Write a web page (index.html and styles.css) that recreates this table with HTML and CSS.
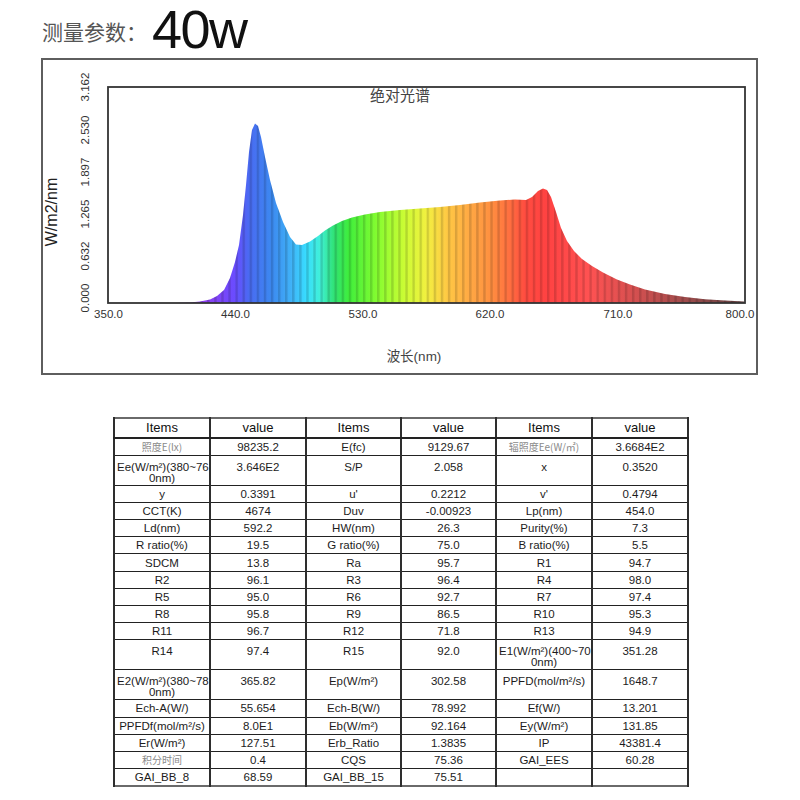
FILE: index.html
```html
<!DOCTYPE html>
<html lang="zh">
<head>
<meta charset="utf-8">
<title>测量参数</title>
<link rel="stylesheet" href="styles.css">
</head>
<body>
<div class="header">
  <span class="label">测量参数：</span>
  <span class="power">40w</span>
</div>

<div class="chart">
  <svg class="chart-svg" width="713" height="313" viewBox="43 60 713 313" xmlns="http://www.w3.org/2000/svg">
    <defs>
      <linearGradient id="spec-grad" gradientUnits="userSpaceOnUse" x1="108" y1="0" x2="745" y2="0">
        <stop offset="0.066" stop-color="#8a38d8"/>
        <stop offset="0.155" stop-color="#8c40f0"/>
        <stop offset="0.199" stop-color="#6a4cff"/>
        <stop offset="0.221" stop-color="#4a6af2"/>
        <stop offset="0.256" stop-color="#3c88f0"/>
        <stop offset="0.289" stop-color="#40b4f8"/>
        <stop offset="0.311" stop-color="#38dcff"/>
        <stop offset="0.333" stop-color="#40f0d8"/>
        <stop offset="0.355" stop-color="#30e274"/>
        <stop offset="0.378" stop-color="#40ee3c"/>
        <stop offset="0.422" stop-color="#84fc30"/>
        <stop offset="0.466" stop-color="#ccfc34"/>
        <stop offset="0.500" stop-color="#f2f040"/>
        <stop offset="0.533" stop-color="#ffc844"/>
        <stop offset="0.566" stop-color="#ffaa44"/>
        <stop offset="0.600" stop-color="#ff9040"/>
        <stop offset="0.633" stop-color="#ff6c40"/>
        <stop offset="0.655" stop-color="#ff4c40"/>
        <stop offset="0.689" stop-color="#ff4242"/>
        <stop offset="0.755" stop-color="#ff5252"/>
        <stop offset="0.822" stop-color="#d85050"/>
        <stop offset="0.911" stop-color="#9c4c4c"/>
        <stop offset="1" stop-color="#604040"/>
      </linearGradient>
      <pattern id="stripes" patternUnits="userSpaceOnUse" x="108" y="0" width="7.08" height="10">
        <rect x="0" y="0" width="2.4" height="10" fill="#000" fill-opacity="0.14"/>
      </pattern>
      <path id="spec" d="M175,303 L190,302.5 L200,301.5 L210,299.5 L217,296 L224,290 L230,278 L235,262 L239,245 L243,215 L246,185 L249,152 L252,130 L255,123.5 L258,126 L261,137 L265,157 L270,180 L276,203 L283,222 L290,237 L296,244.5 L302,245 L310,241.5 L318,236 L325,230.5 L333,225.5 L342,221 L352,217.5 L365,214.5 L380,212 L400,210 L420,208.5 L440,207 L460,205 L480,202.5 L500,200.5 L515,199.5 L526,200 L532,197 L538,191 L543,188.5 L547,190 L551,197 L556,212 L561,228 L567,241 L574,251 L582,259 L592,266 L603,272.5 L617,279.5 L630,284.5 L645,289.5 L665,294 L685,297 L705,299.2 L725,300.6 L744,301.5 L744,303 Z"/>
    </defs>

    <use href="#spec" fill="url(#spec-grad)"/>
    <use href="#spec" fill="url(#stripes)"/>
    <rect x="108" y="87" width="637" height="216" fill="none" stroke="#333" stroke-width="1.8"/>

    <text class="plot-title" x="400" y="101" text-anchor="middle">绝对光谱</text>

    <g class="ytick">
      <text x="85" y="87" transform="rotate(-90 85 87)" text-anchor="middle" dy="4">3.162</text>
      <text x="85" y="130" transform="rotate(-90 85 130)" text-anchor="middle" dy="4">2.530</text>
      <text x="85" y="172" transform="rotate(-90 85 172)" text-anchor="middle" dy="4">1.897</text>
      <text x="85" y="214" transform="rotate(-90 85 214)" text-anchor="middle" dy="4">1.265</text>
      <text x="85" y="256" transform="rotate(-90 85 256)" text-anchor="middle" dy="4">0.632</text>
      <text x="85" y="298" transform="rotate(-90 85 298)" text-anchor="middle" dy="4">0.000</text>
    </g>
    <text class="ylabel" x="51" y="212" transform="rotate(-90 51 212)" text-anchor="middle" dy="6">W/m2/nm</text>

    <g class="xtick">
      <text x="108.5" y="317.5" text-anchor="middle">350.0</text>
      <text x="235.5" y="317.5" text-anchor="middle">440.0</text>
      <text x="363" y="317.5" text-anchor="middle">530.0</text>
      <text x="490" y="317.5" text-anchor="middle">620.0</text>
      <text x="618" y="317.5" text-anchor="middle">710.0</text>
      <text x="740" y="317.5" text-anchor="middle">800.0</text>
    </g>
    <text class="xlabel" x="414" y="361" text-anchor="middle">波长(nm)</text>
  </svg>
</div>

<div class="table-wrap">
  <table class="data">
    <colgroup>
      <col class="c1"><col class="c2"><col class="c3"><col class="c4"><col class="c5"><col class="c6">
    </colgroup>
    <tr class="head">
      <td>Items</td><td>value</td><td>Items</td><td>value</td><td>Items</td><td>value</td>
    </tr>
    <tr>
      <td class="cn">照度E(lx)</td><td>98235.2</td><td>E(fc)</td><td>9129.67</td><td class="cn">辐照度Ee(W/㎡)</td><td>3.6684E2</td>
    </tr>
    <tr class="tall">
      <td>Ee(W/m²)(380~76<br>0nm)</td><td>3.646E2</td><td>S/P</td><td>2.058</td><td>x</td><td>0.3520</td>
    </tr>
    <tr>
      <td>y</td><td>0.3391</td><td>u'</td><td>0.2212</td><td>v'</td><td>0.4794</td>
    </tr>
    <tr>
      <td>CCT(K)</td><td>4674</td><td>Duv</td><td>-0.00923</td><td>Lp(nm)</td><td>454.0</td>
    </tr>
    <tr>
      <td>Ld(nm)</td><td>592.2</td><td>HW(nm)</td><td>26.3</td><td>Purity(%)</td><td>7.3</td>
    </tr>
    <tr>
      <td>R ratio(%)</td><td>19.5</td><td>G ratio(%)</td><td>75.0</td><td>B ratio(%)</td><td>5.5</td>
    </tr>
    <tr>
      <td>SDCM</td><td>13.8</td><td>Ra</td><td>95.7</td><td>R1</td><td>94.7</td>
    </tr>
    <tr>
      <td>R2</td><td>96.1</td><td>R3</td><td>96.4</td><td>R4</td><td>98.0</td>
    </tr>
    <tr>
      <td>R5</td><td>95.0</td><td>R6</td><td>92.7</td><td>R7</td><td>97.4</td>
    </tr>
    <tr>
      <td>R8</td><td>95.8</td><td>R9</td><td>86.5</td><td>R10</td><td>95.3</td>
    </tr>
    <tr>
      <td>R11</td><td>96.7</td><td>R12</td><td>71.8</td><td>R13</td><td>94.9</td>
    </tr>
    <tr class="tall">
      <td>R14</td><td>97.4</td><td>R15</td><td>92.0</td><td>E1(W/m²)(400~70<br>0nm)</td><td>351.28</td>
    </tr>
    <tr class="tall">
      <td>E2(W/m²)(380~78<br>0nm)</td><td>365.82</td><td>Ep(W/m²)</td><td>302.58</td><td>PPFD(mol/m²/s)</td><td>1648.7</td>
    </tr>
    <tr>
      <td>Ech-A(W/)</td><td>55.654</td><td>Ech-B(W/)</td><td>78.992</td><td>Ef(W/)</td><td>13.201</td>
    </tr>
    <tr>
      <td>PPFDf(mol/m²/s)</td><td>8.0E1</td><td>Eb(W/m²)</td><td>92.164</td><td>Ey(W/m²)</td><td>131.85</td>
    </tr>
    <tr>
      <td>Er(W/m²)</td><td>127.51</td><td>Erb_Ratio</td><td>1.3835</td><td>IP</td><td>43381.4</td>
    </tr>
    <tr>
      <td class="cn">积分时间</td><td>0.4</td><td>CQS</td><td>75.36</td><td>GAI_EES</td><td>60.28</td>
    </tr>
    <tr>
      <td>GAI_BB_8</td><td>68.59</td><td>GAI_BB_15</td><td>75.51</td><td></td><td></td>
    </tr>
  </table>
</div>
</body>
</html>
```

FILE: styles.css
```css
html, body {
  margin: 0;
  padding: 0;
  background: #fff;
}

body {
  width: 800px;
  height: 800px;
  overflow: hidden;
  font-family: "Liberation Sans", Arial, "Noto Sans CJK SC", sans-serif;
}

.header {
  display: flex;
  align-items: flex-start;
  height: 58px;
  padding-left: 42px;
  box-sizing: border-box;
}

.header .label {
  font-family: "Noto Sans CJK SC", sans-serif;
  font-size: 21px;
  line-height: 21px;
  color: #555;
  margin-top: 21px;
}

.header .power {
  font-family: "Liberation Sans", Arial, sans-serif;
  font-size: 54px;
  line-height: 54px;
  letter-spacing: -1.5px;
  color: #111;
  margin-top: 2px;
  margin-left: 5px;
}

.chart {
  margin-left: 41px;
  width: 717px;
  height: 317px;
  box-sizing: border-box;
  border: 2px solid #5e5e5e;
}

.chart-svg {
  display: block;
}

.plot-title {
  font-family: "Noto Sans CJK SC", sans-serif;
  font-size: 15px;
  fill: #444;
}

.ytick text,
.xtick text {
  font-family: "Liberation Sans", Arial, sans-serif;
  font-size: 11.5px;
  fill: #333;
}

.ylabel {
  font-family: "Liberation Sans", Arial, sans-serif;
  font-size: 16px;
  fill: #222;
}

.xlabel {
  font-family: "Liberation Sans", Arial, "Noto Sans CJK SC", sans-serif;
  font-size: 13.5px;
  fill: #444;
}

.table-wrap {
  margin: 42px 0 0 113px;
}

.data {
  border-collapse: collapse;
  table-layout: fixed;
  width: 574px;
  border: 2px solid #6a6a6a;
  font-size: 11.5px;
  color: #1c1c1c;
}

.data col.c1, .data col.c2, .data col.c5, .data col.c6 { width: 96px; }
.data col.c3, .data col.c4 { width: 95px; }

.data td {
  border-top: 1px solid #222;
  border-bottom: 1px solid #222;
  border-left: 2px solid #2e2e2e;
  border-right: 2px solid #2e2e2e;
  padding: 0 2px;
  text-align: center;
  vertical-align: middle;
  line-height: 12px;
  white-space: nowrap;
  overflow: hidden;
}

.data tr {
  height: 17.2px;
}

.data tr.head {
  height: 20px;
}

.data tr.head td {
  font-size: 13px;
  color: #111;
  border-bottom-width: 2px;
}

.data tr.tall {
  height: 30px;
}

.data tr.tall td {
  vertical-align: top;
  padding-top: 6px;
  line-height: 11px;
}

.data td.cn {
  font-family: "Noto Sans CJK SC", sans-serif;
  font-size: 10px;
  color: #8a8a8a;
}
```
